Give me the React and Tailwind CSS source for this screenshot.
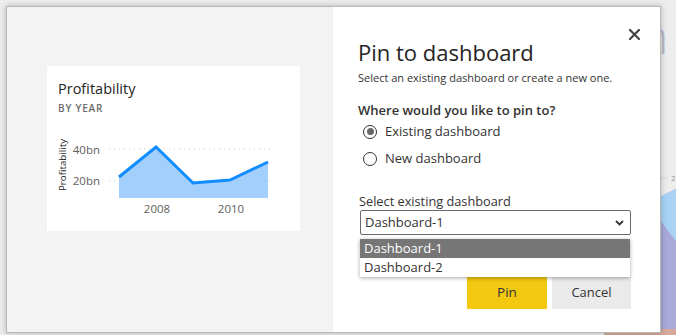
import React from "react";

function Chart() {
  const pts = [
    [72, 62],
    [109, 32],
    [146, 68],
    [183, 65],
    [221, 47],
  ];
  const line = pts.map((p) => p.join(",")).join(" ");
  const area = `72,83 ${line} 221,83`;
  return (
    <svg width="253" height="116" viewBox="0 0 253 116" className="block">
      <line x1="62" y1="34" x2="226" y2="34" stroke="#c8c8c8" strokeWidth="1" strokeDasharray="1 4" />
      <line x1="62" y1="66" x2="226" y2="66" stroke="#c8c8c8" strokeWidth="1" strokeDasharray="1 4" />
      <polygon points={area} fill="#a3cffc" />
      <polyline points={line} fill="none" stroke="#118dff" strokeWidth="3" strokeLinejoin="miter" />
      <text x="53" y="39" textAnchor="end" fontSize="11.5" fill="#605e5c" fontFamily="'Open Sans', sans-serif">40bn</text>
      <text x="53" y="70" textAnchor="end" fontSize="11.5" fill="#605e5c" fontFamily="'Open Sans', sans-serif">20bn</text>
      <text x="110" y="98" textAnchor="middle" fontSize="11.5" fill="#605e5c" fontFamily="'Open Sans', sans-serif">2008</text>
      <text x="184" y="98" textAnchor="middle" fontSize="11.5" fill="#605e5c" fontFamily="'Open Sans', sans-serif">2010</text>
      <text
        x="0"
        y="0"
        transform="translate(19 50) rotate(-90)"
        textAnchor="middle"
        fontSize="9.75"
        fill="#252423"
        fontFamily="'Open Sans', sans-serif"
      >
        Profitability
      </text>
    </svg>
  );
}

function Radio({ checked, label }) {
  return (
    <div className="flex items-center gap-[8px] h-[27px]">
      <div className="w-[14px] h-[14px] rounded-full border-[1.5px] border-[#333] flex items-center justify-center">
        {checked && <div className="w-[7px] h-[7px] rounded-full bg-[#666]" />}
      </div>
      <span className="text-[13px] text-[#333]">{label}</span>
    </div>
  );
}

export default function App() {
  return (
    <div
      className="relative w-[676px] h-[335px] overflow-hidden bg-[#ededed] pt-[6px] pl-[6px]"
      style={{ fontFamily: "'Open Sans', 'Noto Sans', sans-serif" }}
    >
      {/* background content behind the dialog */}
      <div className="absolute left-[640px] top-[12px] text-[48px] leading-none text-[#b4bcc8] font-light">n</div>
      <svg className="absolute left-0 top-0" width="676" height="335" viewBox="0 0 676 335">
        <defs>
          <clipPath id="pie">
            <circle cx="722" cy="302" r="122" />
          </clipPath>
        </defs>
        <g clipPath="url(#pie)">
          <rect x="560" y="170" width="200" height="170" fill="#a9a9da" />
          <polygon points="722,302 545,68 760,60 760,302" fill="#a8d3f5" />
          <rect x="560" y="329" width="200" height="6" fill="#d6a99c" />
        </g>
        <line x1="660" y1="178" x2="668" y2="178" stroke="#d8d8d8" />
        <text x="671" y="181" fontSize="8" fill="#9a9a9a" fontFamily="'Open Sans', sans-serif">2</text>
      </svg>

      {/* dialog */}
      <div className="relative flex w-[655px] h-[327px] border border-[#b8b8b8] shadow-[0_0_6px_rgba(0,0,0,0.25)] bg-white">
        {/* left preview */}
        <div className="w-[326px] h-full bg-[#f3f3f3] pl-[40px] pt-[59px]">
          <div className="w-[253px] h-[165px] bg-white">
            <div className="pl-[11px] pt-[13px] h-[49px]">
              <div className="text-[14.5px] leading-[20px] text-[#252423]">Profitability</div>
              <div className="text-[10px] leading-[14px] mt-[2px] tracking-[0.08em] font-semibold text-[#6e6e6e]">BY YEAR</div>
            </div>
            <Chart />
          </div>
        </div>

        {/* right form */}
        <div className="relative flex-1 h-full bg-white pl-[25px] pt-[30px]">
          <button className="absolute right-[19px] top-[20px] w-[14px] h-[14px] flex items-center justify-center">
            <svg width="11" height="11" viewBox="0 0 11 11">
              <path d="M1 1 L10 10 M10 1 L1 10" stroke="#444" strokeWidth="2.2" strokeLinecap="square" />
            </svg>
          </button>
          <div className="text-[22px] leading-[30px] text-[#252423]">Pin to dashboard</div>
          <div className="text-[11px] leading-[16px] text-[#333] mt-[3px]">
            Select an existing dashboard or create a new one.
          </div>
          <div className="text-[13px] leading-[20px] font-semibold text-[#333] mt-[14px]">
            Where would you like to pin to?
          </div>
          <div className="pl-[5px] -mt-[2px]">
            <Radio checked label="Existing dashboard" />
            <Radio label="New dashboard" />
          </div>
          <div className="text-[12.75px] leading-[17px] text-[#333] mt-[21px] pl-[1px]">Select existing dashboard</div>
          <div className="relative w-[271px] ml-[2px]">
            <div className="h-[25px] border border-[#6a6a6a] rounded-[2px] flex items-center justify-between pl-[4px] pr-[6px]">
              <span className="text-[13px] text-[#333]">Dashboard-1</span>
              <svg width="9" height="6" viewBox="0 0 9 6">
                <path d="M1 1 L4.5 4.5 L8 1" fill="none" stroke="#333" strokeWidth="1.8" />
              </svg>
            </div>
            <div className="absolute left-0 top-[29px] w-[270px] bg-white shadow-[0_1px_4px_rgba(0,0,0,0.35)] z-10">
              <div className="h-[19px] bg-[#767676] text-white text-[13px] leading-[19px] pl-[4px]">Dashboard-1</div>
              <div className="h-[19px] bg-white text-[#333] text-[13px] leading-[19px] pl-[4px]">Dashboard-2</div>
            </div>
            <div className="flex justify-end gap-[5px] mt-[41px]">
              <button className="w-[80px] h-[33px] bg-[#f2c811] text-[13.5px] text-[#333]">Pin</button>
              <button className="w-[79px] h-[33px] bg-[#eaeaea] text-[13px] text-[#333]">Cancel</button>
            </div>
          </div>
        </div>
      </div>
    </div>
  );
}
